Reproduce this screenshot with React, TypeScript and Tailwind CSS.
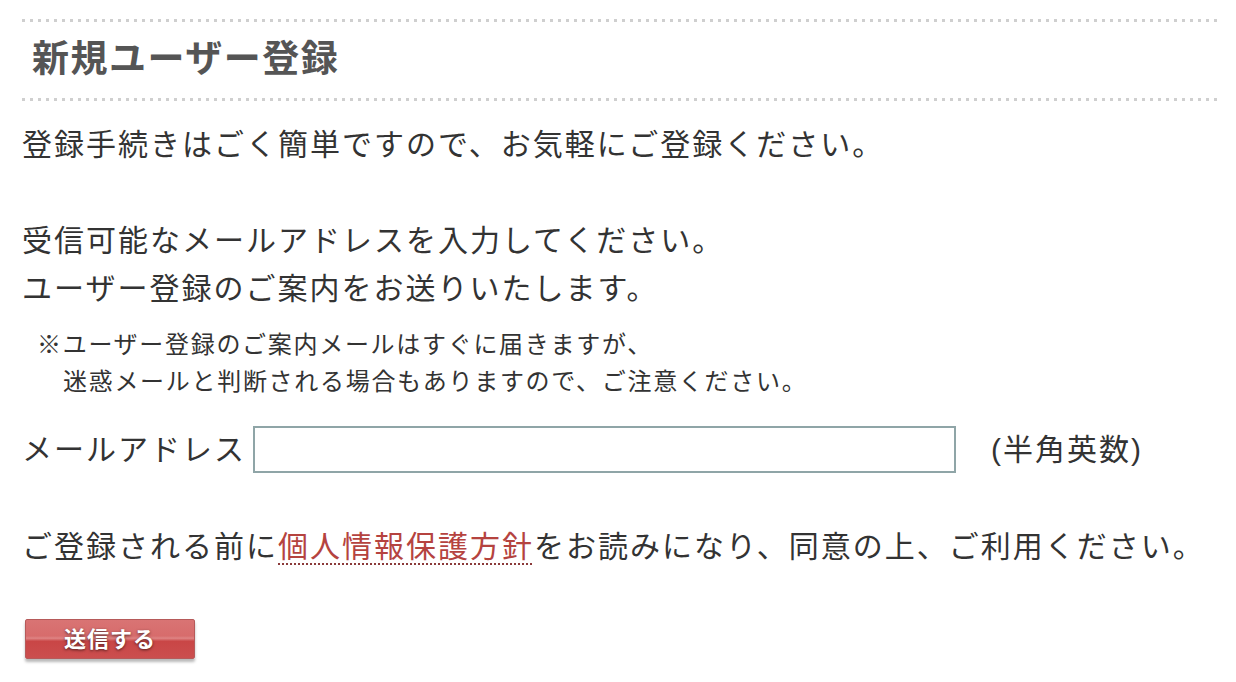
import React from 'react';

const font = "font-['Liberation_Sans','Noto_Sans_CJK_JP',sans-serif]";

function DottedRule() {
  return <div className="h-[3px] bg-[linear-gradient(to_right,#cfcfcf_3px,transparent_3px)] bg-[length:8px_3px] bg-repeat-x" />;
}

export default function App() {
  return (
    <div className={`w-[1236px] min-h-[682px] bg-white pl-[22px] pr-[14px] pt-[19px] text-[#333] ${font}`}>
      <div className="w-[1200px]">
        <DottedRule />
        <h1 className="h-[76px] flex items-center pl-[10px] text-[37px] font-bold tracking-[1.5px] text-[#555]">
          新規ユーザー登録
        </h1>
        <DottedRule />
      </div>

      {/* intro */}
      <p className="mt-[20px] text-[30px] leading-[48px] tracking-[2px]">
        登録手続きはごく簡単ですので、お気軽にご登録ください。
      </p>
      <p className="mt-[48px] text-[30px] leading-[48px] tracking-[2px]">
        受信可能なメールアドレスを入力してください。
        <br />
        ユーザー登録のご案内をお送りいたします。
      </p>

      {/* note */}
      <p className="mt-[13px] ml-[15px] pl-[26px] -indent-[26px] text-[24px] leading-[37px] tracking-[1.7px]">
        ※ユーザー登録のご案内メールはすぐに届きますが、
        <br />
        迷惑メールと判断される場合もありますので、ご注意ください。
      </p>

      {/* email */}
      <div className="mt-[25px] flex items-center h-[48px] text-[30px] tracking-[2px]">
        <span>メールアドレス</span>
        <input
          type="text"
          className="ml-[7px] w-[703px] h-[47px] border-2 border-[#8fa5a7] bg-white outline-none px-2"
        />
        <span className="ml-[35px]">(半角英数)</span>
      </div>

      {/* privacy */}
      <p className="mt-[50px] text-[30px] leading-[48px] tracking-[2px]">
        ご登録される前に
        <a
          href="#"
          className="text-[#b5433f] underline decoration-dotted decoration-2 decoration-[#8b3a3a] underline-offset-[6px]"
        >
          個人情報保護方針
        </a>
        をお読みになり、同意の上、ご利用ください。
      </p>

      {/* submit */}
      <button
        type="button"
        className="mt-[48px] ml-[3px] w-[170px] h-[40px] rounded-[2px] border border-[#b65a5a] bg-[linear-gradient(to_bottom,#d97474_0%,#d76c6c_42%,#de8484_48%,#c94646_56%,#cb4e4e_100%)] shadow-[0_3px_3px_rgba(0,0,0,0.28)] text-white text-[22px] font-bold tracking-[1px] [text-shadow:0_1px_3px_rgba(0,0,0,0.6)]"
      >
        送信する
      </button>
    </div>
  );
}
